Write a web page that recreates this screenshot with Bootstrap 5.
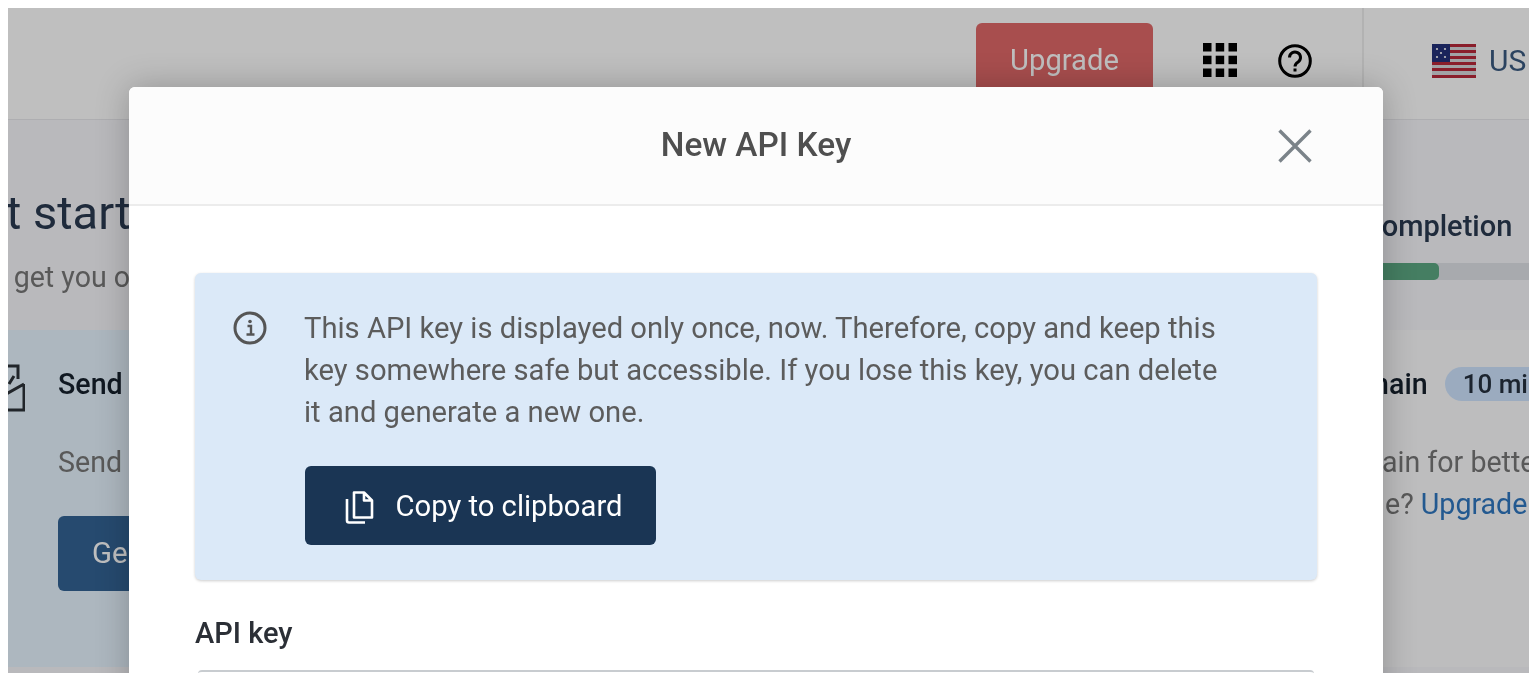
<!DOCTYPE html>
<html lang="en">
<head>
  <meta charset="UTF-8">
  <meta name="viewport" content="width=device-width, initial-scale=1">
  <title>New API Key</title>
  <link href="https://cdn.jsdelivr.net/npm/bootstrap@5.3.3/dist/css/bootstrap.min.css" rel="stylesheet">
  <style>
    html, body { height: 100%; overflow: hidden; background: #fff; }
    body { font-family: Roboto, "Liberation Sans", sans-serif; }
    .app-frame { position: relative; overflow: hidden; margin: 8px 11px 0 8px; height: 665px; background: #f7f7fb; filter: blur(.45px); }
    .app-topbar { height: 112px; background: #fff; border-bottom: 1px solid #e8e8ec; }
    .btn-upgrade { width: 177px; height: 74px; margin: 15px 50px 0 0; padding-top: 8px; font-size: 29.2px; color: #fff; background: #e06868; border: 0; border-radius: 6px; }
    .top-icon { margin-top: 35px; flex: none; }
    .help-icon { margin: 36px 0 0 41px; flex: none; }
    .lang-box { width: 167px; margin-left: 50px; padding: 36px 0 0 68px; border-left: 2px solid #eee; font-size: 30px; color: #3a5a80; gap: 13px; }
    .lang-box span { margin-top: -6px; }
    .page-inner { width: 1700px; margin-left: -47px; }
    .intro-row { height: 210px; }
    .page-title { font-size: 47px; font-weight: 400; color: #2a3a50; margin: 65px 0 0 -12px; white-space: nowrap; }
    .page-sub { font-size: 28.6px; color: #777; margin: 15px 0 0 -13px; white-space: nowrap; }
    .progress-box { width: 400px; margin: 86px 0 0 1144px; }
    .progress-label { font-size: 29px; font-weight: 500; color: #2a3a50; line-height: 40px; white-space: nowrap; }
    .progress-track { height: 17px; margin-top: 17px; background: #e0e3e8; border-radius: 5px; overflow: hidden; }
    .progress-fill { height: 100%; background: #5ca983; border-radius: 5px; }
    .task-row { height: 337px; }
    .task-first { width: 1000px; padding: 34px 0 0 18px; background: #e7f5ff; }
    .task-second { flex: 1; padding: 34px 0 0 0; background: #fcfcfe; }
    .task-title { font-size: 28.6px; font-weight: 500; color: #16202c; line-height: 40px; white-space: nowrap; }
    .task-text { font-size: 28.6px; color: #777; line-height: 42px; white-space: nowrap; }
    .task-gap { margin-top: 37px; }
    .task-btn { display: block; width: 300px; height: 75px; margin-top: 33px; padding: 0 0 0 34px; text-align: left; font-size: 29.4px; color: #fff; background: #336395; border: 0; border-radius: 6px; }
    .task-body { margin-left: 33px; }
    .task-head { padding-left: 289px; }
    .task-line { padding-left: 396px; }
    .task-line-link { padding-left: 424px; }
    .time-pill { display: inline-block; height: 34px; padding: 0 18px; margin-left: 17px; border-radius: 17px; font-size: 26px; font-weight: 500; line-height: 34px; background: #cfe5ff; color: #26313f; }
    .task-link { color: #2f77c0; text-decoration: none; }
    .app-backdrop { position: absolute; inset: 0; background: rgba(0, 0, 0, .25); }
    .dialog-wrap { position: absolute; left: 121px; top: 79px; width: 1254px; height: 640px; }
    .dialog-wrap .modal-content { height: 100%; background: #fff; border: 0; border-radius: 6px; box-shadow: 0 0 34px rgba(0, 0, 0, .24); }
    .dialog-wrap .modal-header { height: 119px; padding: 0 71px 0 105px; background: #fcfcfc; border-bottom: 2px solid #ececec; border-radius: 6px 6px 0 0; }
    .dialog-wrap .modal-title { flex: 1; text-align: center; font-size: 33.4px; font-weight: 500; color: #4f4f4f; }
    .close-x { padding: 0; border: 0; background: none; line-height: 0; }
    .dialog-wrap .modal-body { padding: 67px 66px 0; }
    .key-alert { display: flex; height: 307px; padding: 34px 38px 0; margin: 0; background: #dbe9f8; border: 0; border-radius: 6px; box-shadow: 0 1px 3px rgba(0, 0, 0, .2); }
    .key-main { margin-left: 20px; padding-left: 17px; }
    .key-text { width: 925px; margin: 0; font-size: 29.2px; line-height: 42px; color: #5c5c5c; }
    .btn-copy { width: 351px; height: 79px; margin: 33px 0 0 1px; padding: 2px 0 0 5px; gap: 22px; font-size: 29.2px; color: #fff; background: #1a3554; border: 0; border-radius: 6px; }
    .key-label { margin: 37px 0 0; font-size: 29px; font-weight: 500; line-height: 32px; color: #2b2f36; }
    .key-input { height: 60px; margin: 21px 3px 0; background: #fff; border: 0; border-top: 2px solid #c8ccd0; border-radius: 4px 4px 0 0; }
  </style>
</head>
<body>

<div class="app-frame">
  <div class="app-topbar d-flex justify-content-end">
    <button class="btn btn-upgrade flex-shrink-0">Upgrade</button>
    <svg class="top-icon" width="34" height="34" viewBox="0 0 34 34" fill="#000">
      <rect x="0" y="0" width="8.500" height="8.500"/><rect x="12.700" y="0" width="8.500" height="8.500"/><rect x="25.500" y="0" width="8.500" height="8.500"/>
      <rect x="0" y="12.700" width="8.500" height="8.500"/><rect x="12.700" y="12.700" width="8.500" height="8.500"/><rect x="25.500" y="12.700" width="8.500" height="8.500"/>
      <rect x="0" y="25.500" width="8.500" height="8.500"/><rect x="12.700" y="25.500" width="8.500" height="8.500"/><rect x="25.500" y="25.500" width="8.500" height="8.500"/>
    </svg>
    <svg class="help-icon" width="34" height="34" viewBox="0 0 34 34" fill="none" stroke="#000">
      <circle cx="17" cy="17" r="15.300" stroke-width="3"/>
      <path d="M11.500 13.500a5.500 5.500 0 1 1 8.600 4.500c-2 1.300-3.100 2.300-3.100 4.500" stroke-width="3"/>
      <path d="M17 24.500v3" stroke-width="3"/>
    </svg>
    <div class="lang-box d-flex align-items-start text-nowrap">
      <svg width="44" height="34" viewBox="0 0 44 34" class="flex-shrink-0">
        <rect width="44" height="34" fill="#d8d8dc"/>
        <g fill="#b9293a"><rect y="0" width="44" height="3"/><rect y="6" width="44" height="3"/><rect y="12" width="44" height="3"/><rect y="18" width="44" height="3"/><rect y="24" width="44" height="3"/><rect y="31" width="44" height="3"/></g>
        <rect width="18" height="18" fill="#23307a"/>
        <g fill="#fff"><circle cx="5" cy="5" r="1.100"/><circle cx="13" cy="5" r="1.100"/><circle cx="9" cy="9" r="1.100"/><circle cx="5" cy="13" r="1.100"/><circle cx="13" cy="13" r="1.100"/></g>
      </svg>
      <span>US</span>
    </div>
  </div>

  <div class="page-inner">
    <div class="intro-row d-flex">
      <div>
        <h1 class="page-title">Get start</h1>
        <p class="page-sub">Let's get you o</p>
      </div>
      <div class="progress-box">
        <div class="progress-label">Profile completion</div>
        <div class="progress-track"><div class="progress-fill" style="width:42.5%"></div></div>
      </div>
    </div>

    <div class="task-row d-flex">
      <div class="task-first d-flex">
        <svg width="46" height="48" viewBox="0 0 46 48" fill="none" stroke="#2c3238" stroke-width="3" class="flex-shrink-0">
          <path d="M20 2h19v13M30 20l5-8"/>
          <path d="M45 20 22 33M45 20v26H10"/>
        </svg>
        <div class="task-body">
          <div class="task-title">Send</div>
          <div class="task-text task-gap">Send</div>
          <button class="btn task-btn">Ge</button>
        </div>
      </div>
      <div class="task-second">
        <div class="task-head d-flex align-items-center">
          <span class="task-title">Verify domain</span>
          <span class="time-pill">10 min</span>
        </div>
        <div class="task-text task-gap task-line">Main for better</div>
        <div class="task-text task-line-link">e? <a class="task-link" href="#">Upgrade</a></div>
      </div>
    </div>
  </div>

  <div class="app-backdrop"></div>

  <div class="dialog-wrap">
    <div class="modal-content">
      <div class="modal-header">
        <h5 class="modal-title">New API Key</h5>
        <button class="close-x" type="button" aria-label="Close">
          <svg width="34" height="34" viewBox="0 0 34 34" stroke="#7b8389" stroke-width="3.4" fill="none"><path d="M1.500 1.500 32.500 32.500M32.500 1.500 1.500 32.500"/></svg>
        </button>
      </div>
      <div class="modal-body">
        <div class="key-alert">
          <svg width="34" height="34" viewBox="0 0 34 34" fill="none" class="flex-shrink-0 mt-1">
            <circle cx="17" cy="17" r="15" stroke="#555" stroke-width="3"/>
            <path d="M14.500 15h3.500v8M13.500 23.500h8" stroke="#555" stroke-width="2.400"/>
            <circle cx="17" cy="10.500" r="1.800" fill="#555"/>
          </svg>
          <div class="key-main">
            <p class="key-text">This API key is displayed only once, now. Therefore, copy and keep this key somewhere safe but accessible. If you lose this key, you can delete it and generate a new one.</p>
            <button class="btn btn-copy d-flex align-items-center justify-content-center">
              <svg width="30" height="34" viewBox="0 0 30 34" fill="none" stroke="#fff" stroke-width="2.600" stroke-linejoin="round">
                <path d="M3 9v21.500a2 2 0 0 0 2 2h16"/>
                <path d="M10 2.500h10l8 8v17H10zM20 2.500v8h8"/>
              </svg>
              <span>Copy to clipboard</span>
            </button>
          </div>
        </div>
        <div class="key-label">API key</div>
        <div class="key-input"></div>
      </div>
    </div>
  </div>
</div>

<script src="https://cdn.jsdelivr.net/npm/bootstrap@5.3.3/dist/js/bootstrap.bundle.min.js"></script>
</body>
</html>
